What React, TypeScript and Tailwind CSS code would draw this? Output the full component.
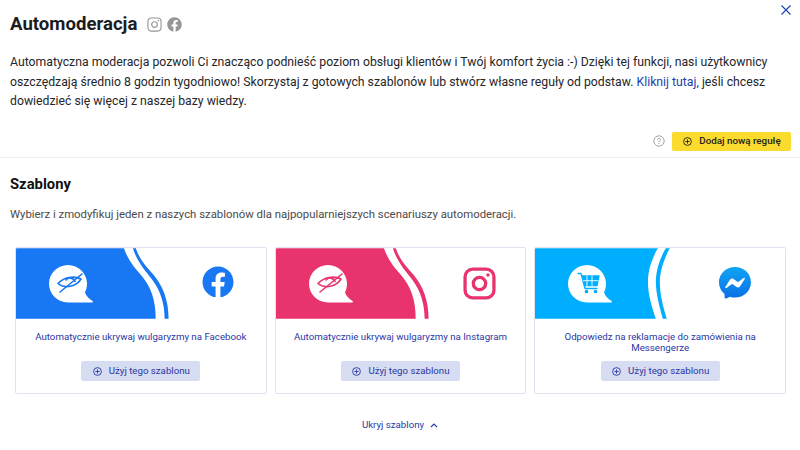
import React from "react";
import { FaFacebook } from "react-icons/fa";

const PlusCircle = ({ className }: { className: string }) => (
  <svg viewBox="0 0 12 12" className={className} fill="none" stroke="currentColor" strokeWidth="1.200">
    <circle cx="6" cy="6" r="5.200" />
    <path d="M6 3.200v5.600M3.200 6h5.600" />
  </svg>
);

const InstagramOutline = ({ className, width }: { className: string; width: number }) => (
  <svg viewBox="0 0 32 32" className={className} fill="none" stroke="currentColor" strokeWidth={width}>
    <rect x="2" y="2" width="28" height="28" rx="7.500" />
    <circle cx="16" cy="16" r="6" />
    <circle cx="24.200" cy="7.800" r="1.700" fill="currentColor" stroke="none" />
  </svg>
);

const Messenger = ({ className }: { className: string }) => (
  <svg viewBox="0 0 36 36" className={className}>
    <defs>
      <linearGradient id="messenger-fill" x1="0.500" y1="0" x2="0.500" y2="1">
        <stop offset="0" stopColor="#10a5f5" />
        <stop offset="1" stopColor="#0a6fe6" />
      </linearGradient>
    </defs>
    <path
      d="M18 1C8.600 1 1 8 1 17.200c0 4.800 2 9 5.400 11.900.3.200.5.600.5 1l.1 3c0 1 1 1.600 1.900 1.200l3.300-1.500c.3-.1.600-.2.900-.1 1.500.4 3.100.6 4.800.6 9.400 0 17-7 17-16.200S27.400 1 18 1z"
      fill="url(#messenger-fill)"
    />
    <path
      d="M7.800 22.300l5-7.900c.8-1.300 2.500-1.600 3.700-.7l4 3c.4.3.9.3 1.200 0l5.400-4.100c.7-.6 1.700.3 1.200 1.100l-5 7.900c-.8 1.300-2.500 1.600-3.700.7l-4-3c-.4-.3-.9-.3-1.200 0l-5.400 4.100c-.7.6-1.700-.3-1.200-1.100z"
      fill="#fff"
    />
  </svg>
);

const Wave = ({ color }: { color: string }) => (
  <svg viewBox="0 0 252 71" className="absolute inset-0 h-[71px] w-full" fill={color}>
    <path d="M0 0H109C113 12 120 20 127 28C136 39 141 52 141 71H0Z" />
    <path d="M118 0C122 13 130 22 137 31C146 43 150 56 150 71H154C154 52 148 38 139 27C131 18 124 10 121 0Z" />
  </svg>
);

const WaveBack = ({ color }: { color: string }) => (
  <svg viewBox="0 0 252 71" className="absolute inset-0 h-[71px] w-full" fill={color}>
    <path d="M0 0H124C117 12 114 24 114 34C114 46 118 60 122 71H0Z" />
    <path d="M132 0C125 12 122 24 122 34C122 46 126 60 129 71H133C129 58 126 46 126 34C126 24 130 11 136 0Z" />
  </svg>
);

const Bubble = ({ children }: { children: React.ReactNode }) => (
  <svg viewBox="0 0 46 38" className="absolute left-[33px] top-[17px] h-[38px] w-[46px]">
    <path
      d="M19 0C29.500 0 38 8.500 38 18.500C38 22 37.200 25 36 27.500C37.200 31 40 34 43.500 36C44.500 36.800 44 37.500 42.500 37.500H19C8.500 37.500 0 29 0 18.800C0 8.500 8.500 0 19 0Z"
      fill="#fff"
    />
    {children}
  </svg>
);

const EyeOff = ({ color }: { color: string }) => (
  <g fill="none" stroke={color} strokeWidth="1.600" strokeLinecap="round" strokeLinejoin="round">
    <path d="M9 18.500C15 12 25 10.500 32 14C27.500 21.500 16 24.500 9 18.500Z" />
    <path d="M17 15C19 12 25 12.500 26 16.500" />
    <path d="M11 27L33 9" />
  </g>
);

const Cart = () => (
  <g fill="none" stroke="#00aeff" strokeWidth="1.300" strokeLinecap="round" strokeLinejoin="round">
    <path d="M10 8.500H13L17 23.500H29" />
    <path d="M14 11H31L29 20.500H16.500" fill="#00aeff" />
    <path d="M19 11V20.500M24 11V20.500M15.500 15.700H30" stroke="#fff" strokeWidth="0.900" />
    <circle cx="18.500" cy="26.500" r="1.200" fill="#00aeff" />
    <circle cx="27.500" cy="26.500" r="1.200" fill="#00aeff" />
  </g>
);

const templates = [
  { title: "Automatycznie ukrywaj wulgaryzmy na Facebook", color: "#1877f2", wave: "front", icon: "eye", logo: "facebook" },
  { title: "Automatycznie ukrywaj wulgaryzmy na Instagram", color: "#e8336d", wave: "front", icon: "eye", logo: "instagram" },
  { title: "Odpowiedz na reklamacje do zamówienia na Messengerze", color: "#00aeff", wave: "back", icon: "cart", logo: "messenger" },
];

export default function App() {
  return (
    <div className="relative h-[450px] w-[800px] overflow-hidden bg-white font-['Roboto',sans-serif] text-[#26262a]">
      <button className="absolute right-[9px] top-[5px] text-[#1c3fb0]">
        <svg viewBox="0 0 10 10" className="h-[10px] w-[10px]" fill="none" stroke="currentColor" strokeWidth="1.100">
          <path d="M.5.5l9 9M9.500.5l-9 9" />
        </svg>
      </button>

      <div className="h-[158px] border-b border-[#eeeeee] px-[10px] pt-[12px]">
        <div className="flex h-[24px] items-center">
          <h1 className="text-[18.600px] font-bold leading-[24px] text-[#1c1c1e]">Automoderacja</h1>
          <InstagramOutline className="ml-[10px] h-[15px] w-[15px] text-[#969696]" width={2.400} />
          <FaFacebook className="ml-[5px] h-[15px] w-[15px] text-[#969696]" />
        </div>
        <p className="mt-[17px] w-[770px] text-[12.250px] leading-[19.500px]">
          Automatyczna moderacja pozwoli Ci znacząco podnieść poziom obsługi klientów i Twój komfort życia :-) Dzięki tej funkcji, nasi użytkownicy oszczędzają średnio 8 godzin tygodniowo! Skorzystaj z gotowych szablonów lub stwórz własne reguły od podstaw.{" "}
          <a className="text-[#1c3fb0]">Kliknij tutaj,</a> jeśli chcesz dowiedzieć się więcej z naszej bazy wiedzy.
        </p>
        <div className="mt-[20px] flex items-center justify-end gap-[7px]">
          <svg viewBox="0 0 12 12" className="h-[12px] w-[12px] text-[#9a9a9a]" fill="none" stroke="currentColor" strokeWidth="0.900">
            <circle cx="6" cy="6" r="5.200" />
            <path d="M4.500 4.800C4.500 3.900 5.200 3.400 6 3.400C6.900 3.400 7.500 3.900 7.500 4.700C7.500 5.700 6 5.700 6 7" />
            <circle cx="6" cy="8.600" r="0.600" fill="currentColor" stroke="none" />
          </svg>
          <button className="-mr-px flex h-[19px] w-[119px] items-center justify-center gap-[7px] rounded-[2px] bg-[#fadb2e] pl-[1px] text-[9.800px] font-medium text-[#23231f]">
            <PlusCircle className="h-[9px] w-[9px]" />
            Dodaj nową regułę
          </button>
        </div>
      </div>

      <div className="px-[10px] pt-[16px]">
        <h2 className="text-[14.800px] font-bold leading-[20px] text-[#111]">Szablony</h2>
        <p className="mt-[11px] text-[11.360px] leading-[18px] text-[#4a4a4a]">
          Wybierz i zmodyfikuj jeden z naszych szablonów dla najpopularniejszych scenariuszy automoderacji.
        </p>
      </div>

      <div className="mt-[24px] grid grid-cols-3 gap-[8px] pl-[15px] pr-[14px]">
        {templates.map((t) => (
          <div key={t.title} className="h-[147px] overflow-hidden rounded-[2px] border border-[#dfe2ee] bg-white">
            <div className="relative h-[71px]">
              {t.wave === "front" ? <Wave color={t.color} /> : <WaveBack color={t.color} />}
              <Bubble>{t.icon === "eye" ? <EyeOff color={t.color} /> : <Cart />}</Bubble>
              {t.logo === "facebook" && <FaFacebook className="absolute left-[186px] top-[18px] h-[32px] w-[32px] text-[#1877f2]" />}
              {t.logo === "instagram" && <InstagramOutline className="absolute left-[187px] top-[19px] h-[33px] w-[33px] text-[#e8336d]" width={3.200} />}
              {t.logo === "messenger" && <Messenger className="absolute left-[183px] top-[18px] h-[34px] w-[34px]" />}
            </div>
            <div className="flex h-[38px] items-start justify-center px-[16px] pt-[13px] text-center text-[9.700px] leading-[10.500px] text-[#2a38a5]">
              {t.title}
            </div>
            <button className="mx-auto mt-[4px] flex h-[20px] w-[119px] items-center justify-center gap-[7px] rounded-[2px] bg-[#d6dcf1] pl-[1px] text-[9.700px] text-[#2a38a5]">
              <PlusCircle className="h-[9px] w-[9px]" />
              Użyj tego szablonu
            </button>
          </div>
        ))}
      </div>

      <div className="mt-[24px] flex items-center justify-center gap-[6px] text-[9.700px] leading-[14px] text-[#2a38a5]">
        Ukryj szablony
        <svg viewBox="0 0 8 5" className="h-[5px] w-[8px]" fill="none" stroke="currentColor" strokeWidth="1.100">
          <path d="M1 4L4 1L7 4" />
        </svg>
      </div>
    </div>
  );
}
